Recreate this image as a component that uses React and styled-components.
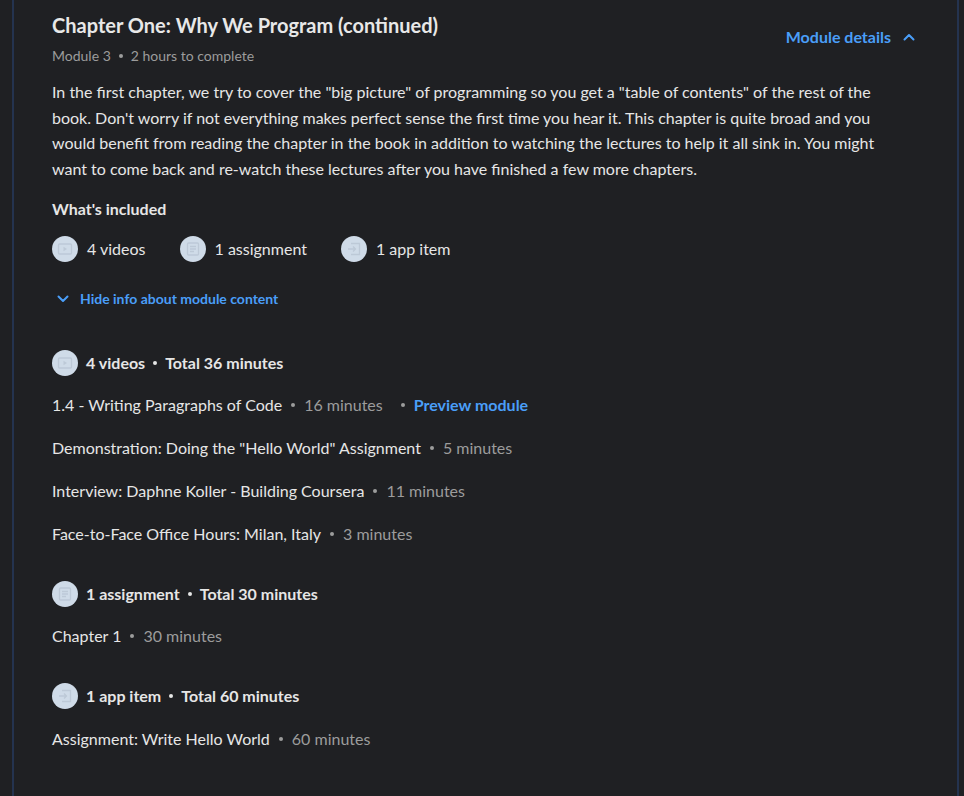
import React from "react";
import styled, { createGlobalStyle } from "styled-components";

const GlobalStyle = createGlobalStyle`
  html, body {
    margin: 0;
    padding: 0;
    background: #1f2023;
  }
  body {
    font-family: Lato, "Noto Sans", sans-serif;
    color: #e6e6e6;
  }
`;

const Panel = styled.section`
  margin-left: 12px;
  width: 947px;
  min-height: 796px;
  box-sizing: border-box;
  border-left: 2px solid #24334f;
  border-right: 2px solid #24334f;
  padding: 11px 40px 40px 38px;
`;

const Head = styled.div`
  display: flex;
  justify-content: space-between;
  align-items: flex-start;
`;

const Title = styled.h2`
  margin: 0;
  font-size: 20px;
  line-height: 28px;
  font-weight: 700;
  color: #e8e8e8;
`;

const Meta = styled.div`
  margin-top: 6px;
  font-size: 14px;
  line-height: 22px;
  color: #9c9c9c;
  display: flex;
  align-items: center;
`;

const Dot = styled.span`
  display: inline-block;
  width: 4px;
  height: 4px;
  border-radius: 50%;
  background: ${(p) => p.$color || "#9c9c9c"};
  margin: 0 ${(p) => p.$gap ?? 8}px 0 ${(p) => p.$lead ?? p.$gap ?? 8}px;
  flex: none;
`;

const DetailsToggle = styled.button`
  margin-top: 15px;
  margin-right: 2px;
  padding: 0;
  background: none;
  border: none;
  font-family: inherit;
  font-size: 16px;
  font-weight: 700;
  line-height: 22px;
  color: #4a9ef8;
  display: flex;
  align-items: center;
  gap: 12px;
  cursor: pointer;
`;

const Summary = styled.p`
  margin: 12px 0 0;
  font-size: 16px;
  line-height: 25.6px;
  max-width: 850px;
  color: #e6e6e6;
`;

const Label = styled.h3`
  margin: 16px 0 0;
  font-size: 16px;
  font-weight: 700;
  line-height: 24px;
  color: #e6e6e6;
`;

const Included = styled.div`
  display: flex;
  gap: 34px;
  margin-top: 15px;
`;

const Chip = styled.div`
  display: flex;
  align-items: center;
  gap: 9px;
  font-size: 16px;
  line-height: 26px;
`;

const Badge = styled.span`
  width: 26px;
  height: 26px;
  border-radius: 50%;
  background: #cfdbe8;
  display: flex;
  align-items: center;
  justify-content: center;
  flex: none;
`;

const HideLink = styled.button`
  margin-top: 27px;
  margin-left: 5px;
  padding: 0;
  background: none;
  border: none;
  font-family: inherit;
  font-size: 14px;
  font-weight: 700;
  line-height: 20px;
  color: #4a9ef8;
  display: flex;
  align-items: center;
  gap: 11px;
  cursor: pointer;
`;

const Group = styled.div`
  margin-top: ${(p) => p.$top}px;
`;

const GroupHead = styled.div`
  display: flex;
  align-items: center;
  gap: 8px;
  font-size: 16px;
  font-weight: 700;
  line-height: 26px;
`;

const Item = styled.div`
  display: flex;
  align-items: center;
  margin-top: ${(p) => p.$top}px;
  font-size: 16px;
  line-height: 26px;
  color: #e6e6e6;
`;

const Muted = styled.span`
  color: #9c9c9c;
`;

const Preview = styled.a`
  color: #4a9ef8;
  font-weight: 700;
  text-decoration: none;
`;

const ICON = "#bdc9d7";

const PlayIcon = () => (
  <svg width="16" height="16" viewBox="0 0 16 16" fill="none" stroke={ICON} strokeWidth="1.3">
    <rect x="1.5" y="3" width="13" height="10" rx="1" />
    <path d="M6.5 5.8v4.4L10 8z" fill={ICON} stroke="none" />
  </svg>
);

const DocIcon = () => (
  <svg width="16" height="16" viewBox="0 0 16 16" fill="none" stroke={ICON} strokeWidth="1.3">
    <rect x="2.5" y="2" width="11" height="12" rx="1" />
    <path d="M5 5.5h6M5 8h6M5 10.5h4" />
  </svg>
);

const AppIcon = () => (
  <svg width="16" height="16" viewBox="0 0 16 16" fill="none" stroke={ICON} strokeWidth="1.3">
    <path d="M5 2.5h8.5v11H5" />
    <path d="M2 8h7.5M7 5.5 9.5 8 7 10.5" />
  </svg>
);

const Chevron = ({ up }) => (
  <svg width="12" height="8" viewBox="0 0 12 8" fill="none" stroke="#4a9ef8" strokeWidth="2" strokeLinecap="round" strokeLinejoin="round">
    {up ? <path d="M1.5 6.5 6 2l4.5 4.5" /> : <path d="M1.5 1.5 6 6l4.5-4.5" />}
  </svg>
);

const groups = [
  {
    icon: <PlayIcon />,
    label: "4 videos",
    total: "Total 36 minutes",
    top: 41,
    items: [
      { name: "1.4 - Writing Paragraphs of Code", time: "16 minutes", preview: true },
      { name: 'Demonstration: Doing the "Hello World" Assignment', time: "5 minutes" },
      { name: "Interview: Daphne Koller - Building Coursera", time: "11 minutes" },
      { name: "Face-to-Face Office Hours: Milan, Italy", time: "3 minutes" },
    ],
  },
  {
    icon: <DocIcon />,
    label: "1 assignment",
    total: "Total 30 minutes",
    top: 34,
    items: [{ name: "Chapter 1", time: "30 minutes" }],
  },
  {
    icon: <AppIcon />,
    label: "1 app item",
    total: "Total 60 minutes",
    top: 34,
    items: [{ name: "Assignment: Write Hello World", time: "60 minutes", top: 17 }],
  },
];

export default function App() {
  return (
    <>
      <GlobalStyle />
      <Panel>
        <Head>
          <div>
            <Title>Chapter One: Why We Program (continued)</Title>
            <Meta>
              Module 3
              <Dot />
              2 hours to complete
            </Meta>
          </div>
          <DetailsToggle>
            Module details
            <Chevron up />
          </DetailsToggle>
        </Head>

        <Summary>
          In the first chapter, we try to cover the "big picture" of programming so you get a "table
          of contents" of the rest of the book. Don't worry if not everything makes perfect sense the
          first time you hear it. This chapter is quite broad and you would benefit from reading the
          chapter in the book in addition to watching the lectures to help it all sink in. You might
          want to come back and re-watch these lectures after you have finished a few more chapters.
        </Summary>

        <Label>What's included</Label>
        <Included>
          <Chip>
            <Badge><PlayIcon /></Badge>4 videos
          </Chip>
          <Chip>
            <Badge><DocIcon /></Badge>1 assignment
          </Chip>
          <Chip>
            <Badge><AppIcon /></Badge>1 app item
          </Chip>
        </Included>

        <HideLink>
          <Chevron />
          Hide info about module content
        </HideLink>

        {groups.map((g) => (
          <Group key={g.label} $top={g.top}>
            <GroupHead>
              <Badge>{g.icon}</Badge>
              {g.label}
              <Dot $color="#e6e6e6" $gap={0} />
              {g.total}
            </GroupHead>
            {g.items.map((it, i) => (
              <Item key={it.name} $top={it.top ?? (i === 0 ? 16 : 17)}>
                {it.name}
                <Dot $gap={9} />
                <Muted>{it.time}</Muted>
                {it.preview && (
                  <>
                    <Dot $gap={9} $lead={18} />
                    <Preview href="#">Preview module</Preview>
                  </>
                )}
              </Item>
            ))}
          </Group>
        ))}
      </Panel>
    </>
  );
}
